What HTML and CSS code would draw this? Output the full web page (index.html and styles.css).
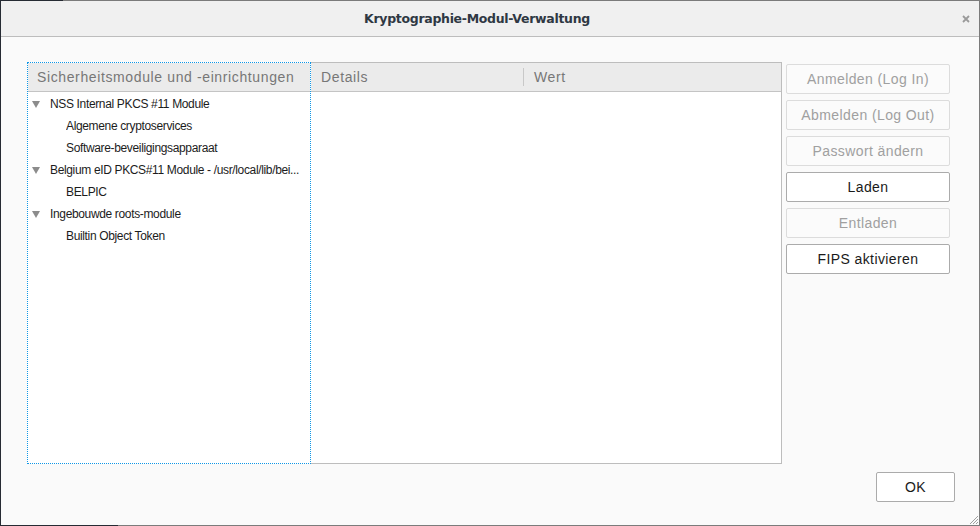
FILE: index.html
```html
<!DOCTYPE html>
<html>
<head>
<meta charset="utf-8">
<link rel="stylesheet" href="styles.css">
</head>
<body>
<div class="window">
  <div class="titlebar">
    <div class="title">Kryptographie-Modul-Verwaltung</div>
    <div class="close">
      <svg width="8" height="8" viewBox="0 0 8 8"><path d="M1 1L7 7M7 1L1 7" stroke="#9a9a9a" stroke-width="1.8"/></svg>
    </div>
  </div>
  <div class="content">
    <div class="toprow">
      <div class="tree">
        <div class="tree-head">Sicherheitsmodule und -einrichtungen</div>
        <div class="tree-body">
          <div class="row parent"><span class="twisty"></span><span class="label">NSS Internal PKCS #11 Module</span></div>
          <div class="row child"><span class="label">Algemene cryptoservices</span></div>
          <div class="row child"><span class="label">Software-beveiligingsapparaat</span></div>
          <div class="row parent"><span class="twisty"></span><span class="label">Belgium eID PKCS#11 Module - /usr/local/lib/bei...</span></div>
          <div class="row child"><span class="label">BELPIC</span></div>
          <div class="row parent"><span class="twisty"></span><span class="label">Ingebouwde roots-module</span></div>
          <div class="row child"><span class="label">Builtin Object Token</span></div>
        </div>
      </div>
      <div class="details">
        <div class="details-head">
          <div class="col col-details">Details</div>
          <div class="col col-wert">Wert</div>
        </div>
        <div class="details-body"></div>
      </div>
      <div class="buttons">
        <button class="btn disabled">Anmelden (Log In)</button>
        <button class="btn disabled">Abmelden (Log Out)</button>
        <button class="btn disabled">Passwort ändern</button>
        <button class="btn">Laden</button>
        <button class="btn disabled">Entladen</button>
        <button class="btn">FIPS aktivieren</button>
      </div>
    </div>
    <div class="footer">
      <button class="btn ok">OK</button>
    </div>
  </div>
  <svg class="grip" width="12" height="12" viewBox="0 0 12 12"><path d="M11 3L3 11M11 6L6 11M11 9L9 11" stroke="#a0a0a0" stroke-width="1"/></svg>
  <div class="edge-top"></div>
  <div class="edge-bottom"></div>
</div>
</body>
</html>
```
FILE: styles.css
```css
html, body {
  margin: 0;
  padding: 0;
  background: #fafafa;
}
body {
  font-family: "Liberation Sans", Arial, sans-serif;
}
.window {
  position: relative;
  width: 980px;
  height: 526px;
  box-sizing: border-box;
  border: 1px solid #7b7b7b;
  border-left-color: #262b33;
  background: #fafafa;
  display: flex;
  flex-direction: column;
}
.edge-top {
  position: absolute;
  left: -1px;
  top: -1px;
  width: 63px;
  height: 1px;
  background: #262b33;
}
.edge-bottom {
  position: absolute;
  left: -1px;
  bottom: -1px;
  width: 118px;
  height: 1px;
  background: #262b33;
}
.titlebar {
  height: 35px;
  flex: none;
  background: #f0f0f0;
  border-bottom: 1px solid #bdbdbd;
  display: flex;
  align-items: center;
}
.title {
  flex: 1;
  text-align: center;
  font-family: "DejaVu Sans", sans-serif;
  font-weight: bold;
  font-size: 12.5px;
  color: #2f3843;
  letter-spacing: -0.3px;
}
.close {
  width: 26px;
  display: flex;
  justify-content: center;
  align-items: center;
}
.close svg { display: block; }
.content {
  flex: 1;
  display: flex;
  flex-direction: column;
  padding: 25px 24px 0 26px;
}
.toprow {
  display: flex;
  height: 402px;
}
.tree {
  width: 284px;
  box-sizing: border-box;
  border: 1px dotted #1097e6;
  background: #ffffff;
  display: flex;
  flex-direction: column;
}
.tree-head {
  height: 28px;
  background: #ebebeb;
  border-bottom: 1px solid #c4c4c4;
  display: flex;
  align-items: center;
  padding-left: 9px;
  font-size: 14px;
  letter-spacing: 0.62px;
  color: #777777;
  white-space: nowrap;
}
.tree-body {
  padding-top: 1px;
}
.row {
  height: 22px;
  display: flex;
  align-items: center;
  font-size: 12px;
  letter-spacing: -0.35px;
  color: #1c1c1c;
  white-space: nowrap;
  padding-right: 2px;
}
.label {
  flex: 1;
  min-width: 0;
  overflow: hidden;
  text-overflow: ellipsis;
}
.parent { padding-left: 4px; }
.child { padding-left: 38px; }
.twisty {
  flex: none;
  width: 0;
  height: 0;
  border-left: 4px solid transparent;
  border-right: 4px solid transparent;
  border-top: 7px solid #8c8c8c;
  margin-right: 10px;
}
.details {
  width: 471px;
  box-sizing: border-box;
  border: 1px solid #bdbdbd;
  border-left: none;
  background: #ffffff;
  display: flex;
  flex-direction: column;
}
.details-head {
  height: 28px;
  background: #ebebeb;
  border-bottom: 1px solid #c4c4c4;
  display: flex;
  align-items: center;
  font-size: 14px;
  letter-spacing: 0.62px;
  color: #777777;
}
.col-details {
  width: 213px;
  padding-left: 10px;
  box-sizing: border-box;
  border-right: 1px solid #c8c8c8;
  line-height: 18px;
}
.col-wert {
  padding-left: 10px;
}
.buttons {
  width: 164px;
  margin-left: 4px;
  padding-top: 2px;
  display: flex;
  flex-direction: column;
  gap: 6px;
}
.btn {
  height: 30px;
  box-sizing: border-box;
  border: 1px solid #ababab;
  border-radius: 2px;
  background: #ffffff;
  font-family: "Liberation Sans", Arial, sans-serif;
  font-size: 14px;
  letter-spacing: 0.4px;
  color: #1a1a1a;
  padding: 0;
  margin: 0;
}
.btn.disabled {
  border-color: #dcdcdc;
  background: #fbfbfb;
  color: #a0a0a0;
}
.footer {
  display: flex;
  justify-content: flex-end;
  padding-top: 8px;
}
.ok {
  width: 79px;
}
.grip {
  position: absolute;
  right: 0;
  bottom: 0;
}
```
